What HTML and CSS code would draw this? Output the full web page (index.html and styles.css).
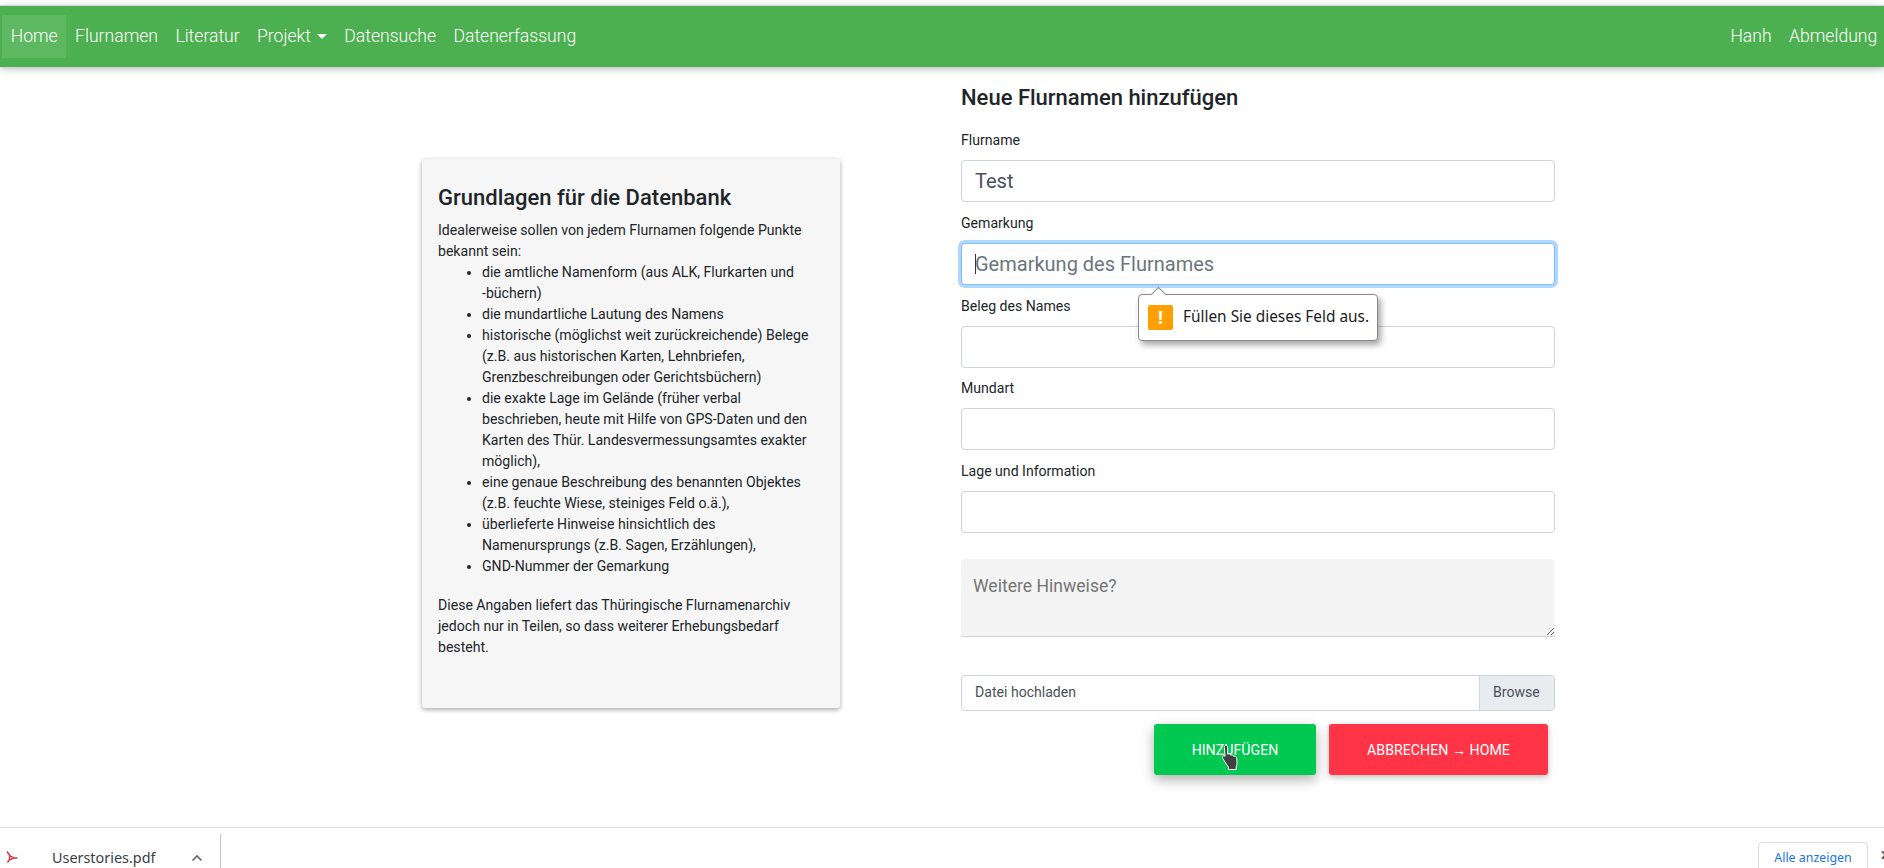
FILE: index.html
```html
<!DOCTYPE html>
<html lang="de">
<head>
    <meta charset="UTF-8">
    <title>Flurnamen</title>
    <link rel="stylesheet" href="styles.css">
</head>
<body>
    <nav class="navbar">
        <ul class="nav-list">
            <li class="nav-item active">Home</li>
            <li class="nav-item">Flurnamen</li>
            <li class="nav-item">Literatur</li>
            <li class="nav-item dropdown">Projekt</li>
            <li class="nav-item">Datensuche</li>
            <li class="nav-item">Datenerfassung</li>
        </ul>
        <ul class="nav-list nav-right">
            <li class="nav-item">Hanh</li>
            <li class="nav-item">Abmeldung</li>
        </ul>
    </nav>

    <main class="content">
        <section class="info-card">
            <h2>Grundlagen für die Datenbank</h2>
            <p>Idealerweise sollen von jedem Flurnamen folgende Punkte bekannt sein:</p>
            <ul class="info-list">
                <li>die amtliche Namenform (aus ALK, Flurkarten und <span class="nowrap">-büchern)</span></li>
                <li>die mundartliche Lautung des Namens</li>
                <li>historische (möglichst weit zurückreichende) Belege (z.B. aus historischen Karten, Lehnbriefen, Grenzbeschreibungen oder Gerichtsbüchern)</li>
                <li>die exakte Lage im Gelände (früher verbal beschrieben, heute mit Hilfe von GPS-Daten und den Karten des Thür. Landesvermessungsamtes exakter möglich),</li>
                <li>eine genaue Beschreibung des benannten Objektes (z.B. feuchte Wiese, steiniges Feld o.ä.),</li>
                <li>überlieferte Hinweise hinsichtlich des Namenursprungs (z.B. Sagen, Erzählungen),</li>
                <li>GND-Nummer der Gemarkung</li>
            </ul>
            <p>Diese Angaben liefert das Thüringische Flurnamenarchiv jedoch nur in Teilen, so dass weiterer Erhebungsbedarf besteht.</p>
        </section>

        <form class="add-form">
            <h3>Neue Flurnamen hinzufügen</h3>
            <div class="field">
                <label>Flurname</label>
                <input class="text-input" type="text" value="Test">
            </div>
            <div class="field">
                <label>Gemarkung</label>
                <div class="text-input focused"><span class="caret-bar"></span>Gemarkung des Flurnames</div>
                <div class="bubble">
                    <span class="bubble-arrow"></span>
                    <span class="bubble-icon">!</span>
                    Füllen Sie dieses Feld aus.
                </div>
            </div>
            <div class="field">
                <label>Beleg des Names</label>
                <input class="text-input" type="text">
            </div>
            <div class="field">
                <label>Mundart</label>
                <input class="text-input" type="text">
            </div>
            <div class="field">
                <label>Lage und Information</label>
                <input class="text-input" type="text">
            </div>
            <textarea class="notes" placeholder="Weitere Hinweise?"></textarea>
            <div class="file-input">
                <span class="file-label">Datei hochladen</span>
                <span class="file-browse">Browse</span>
            </div>
            <div class="buttons">
                <button class="btn btn-add" type="button">HINZUFÜGEN
                    <svg class="hand" width="22" height="26" viewBox="0 0 22 26">
                        <path d="M6 1.5c1 0 1.7.7 1.700 1.700v7l1-.3c.8-.2 1.500.1 1.800.7l.3.6.8-.2c.9-.2 1.600.2 1.900.9l.2.500.7-.1c1.200-.2 2.200.6 2.300 1.800l.3 4.400c.1 1.400-.2 2.700-.8 4v3H8.500v-2.200L2.800 14.500c-.6-.8-.5-1.700.2-2.300.7-.5 1.500-.4 2.100.2l-.8-9c0-1.100.7-1.900 1.700-1.900z" fill="#404040" stroke="#fff" stroke-width="1"/>
                    </svg>
                </button>
                <button class="btn btn-cancel" type="button">ABBRECHEN <span class="arrow">→</span> HOME</button>
            </div>
        </form>
    </main>

    <footer class="download-bar">
        <div class="download-item">
            <svg class="pdf-icon" width="14" height="14" viewBox="0 0 14 14">
                <path d="M2 1.500L4.800 5.500 9 8 4.200 10M4.800 5.500L4.200 10 2.500 12.500M9 8h3.500" fill="none" stroke="#e0323c" stroke-width="1.400"/>
            </svg>
            <span class="file-name">Userstories.pdf</span>
            <svg class="chevron" width="12" height="8" viewBox="0 0 12 8">
                <path d="M1.500 6.500L6 2l4.500 4.500" fill="none" stroke="#5f6368" stroke-width="1.600"/>
            </svg>
        </div>
        <div class="download-right">
            <span class="show-all">Alle anzeigen</span>
            <span class="close-x">×</span>
        </div>
    </footer>
</body>
</html>
```

FILE: styles.css
```css
* {
    box-sizing: border-box;
}
html, body {
    height: 100%;
}
body {
    margin: 0;
    height: 868px;
    overflow: hidden;
    display: flex;
    flex-direction: column;
    font-family: Roboto, "Liberation Sans", sans-serif;
    font-size: 14.080px;
    line-height: 21px;
    color: #212529;
    background-color: #fff;
}

/* navbar */
.navbar {
    flex: none;
    height: 62px;
    margin-top: 5px;
    padding: 0 0 0 2px;
    display: flex;
    justify-content: space-between;
    align-items: center;
    background-color: #4caf50;
    border-top: 1px solid #d9d9d9;
    box-shadow: 0 2px 5px rgba(0, 0, 0, 0.16), 0 2px 10px rgba(0, 0, 0, 0.12);
    position: relative;
}
.nav-list {
    list-style: none;
    margin: 0;
    padding: 0;
    display: flex;
}
.nav-right {
    margin-right: -2px;
}
.nav-item {
    padding: 7px 8.700px;
    font-size: 17.600px;
    font-weight: 300;
    line-height: 29px;
    color: #fff;
}
.nav-item.active {
    background-color: rgba(255, 255, 255, 0.1);
}
.dropdown::after {
    content: "";
    display: inline-block;
    margin-left: 6px;
    vertical-align: 3px;
    border-top: 5px solid #fff;
    border-left: 5px solid transparent;
    border-right: 5px solid transparent;
}

/* page content */
.content {
    flex: 1;
    min-height: 0;
    padding-left: 422px;
    display: flex;
    align-items: flex-start;
    gap: 121px;
}

.info-card {
    width: 418px;
    height: 549px;
    margin-top: 92px;
    padding: 18px 16px;
    background-color: #f6f6f6;
    border-radius: 3px;
    box-shadow: 0 2px 5px rgba(0, 0, 0, 0.26), 0 1px 4px rgba(0, 0, 0, 0.1);
}
.info-card h2 {
    margin: 3px 0 4px;
    font-size: 22px;
    font-weight: 500;
    line-height: 36px;
}
.info-card p {
    margin: 0;
}
.info-list {
    margin: 0 0 18px;
    padding: 0 14px 0 44px;
}
.nowrap {
    white-space: nowrap;
}

/* form */
.add-form {
    width: 594px;
    padding-top: 16px;
}
.add-form h3 {
    margin: 0 0 18px;
    font-size: 22px;
    font-weight: 500;
    line-height: 30px;
}
.field {
    position: relative;
    margin-bottom: 11.750px;
}
.field label {
    display: block;
    margin: -1px 0 9px;
    height: 21px;
}
.text-input {
    display: block;
    width: 100%;
    height: 42px;
    padding: 0 13px;
    border: 1px solid #ced4da;
    border-radius: 4px;
    background-color: #fff;
    font-family: inherit;
    font-size: 20px;
    line-height: 40px;
    color: #495057;
}
.text-input.focused {
    position: relative;
    border-color: #80bdff;
    box-shadow: 0 0 0 3px rgba(0, 123, 255, 0.3);
    color: #6c757d;
}
.caret-bar {
    position: absolute;
    left: 13px;
    top: 10px;
    width: 1px;
    height: 20px;
    background-color: #333;
}

/* browser validation bubble */
.bubble {
    position: absolute;
    z-index: 2;
    left: 177px;
    top: 81px;
    width: 240px;
    height: 47px;
    padding-left: 44px;
    border: 1px solid #8a8a8a;
    border-radius: 4px;
    background-color: #fff;
    box-shadow: 3px 4px 6px rgba(0, 0, 0, 0.35);
    font-family: "Noto Sans", sans-serif;
    font-size: 15.400px;
    line-height: 44px;
    color: #202124;
    white-space: nowrap;
}
.bubble-arrow {
    position: absolute;
    left: 14px;
    top: -6px;
    width: 11px;
    height: 11px;
    background-color: #fff;
    border-top: 1px solid #8a8a8a;
    border-left: 1px solid #8a8a8a;
    transform: rotate(45deg);
}
.bubble-icon {
    position: absolute;
    left: 9px;
    top: 10px;
    width: 25px;
    height: 25px;
    border-radius: 2px;
    background-color: #ffa000;
    color: #fff;
    font-size: 18px;
    font-weight: 700;
    line-height: 25px;
    text-align: center;
}

.notes {
    display: block;
    width: 100%;
    height: 78px;
    margin-top: 26px;
    padding: 14px 12px 12px;
    border: 0;
    border-bottom: 1px solid #ced4da;
    border-radius: 4px 4px 0 0;
    background-color: #f4f4f4;
    font-family: inherit;
    font-size: 17.600px;
    line-height: 27px;
}
.notes::placeholder {
    color: #757575;
}

.file-input {
    display: flex;
    height: 36px;
    margin-top: 38px;
    border: 1px solid #ced4da;
    border-radius: 4px;
    line-height: 33px;
    color: #495057;
}
.file-label {
    flex: 1;
    padding-left: 13px;
}
.file-browse {
    width: 75px;
    padding-left: 13px;
    background-color: #e9ecef;
    border-left: 1px solid #ced4da;
    border-radius: 0 4px 4px 0;
}

.buttons {
    display: flex;
    gap: 13px;
    margin-top: 13px;
    padding-left: 193px;
}
.btn {
    position: relative;
    height: 51px;
    padding: 0;
    border: 0;
    border-radius: 3px;
    color: #fff;
    font-family: inherit;
    font-size: 14.200px;
    box-shadow: 0 2px 5px rgba(0, 0, 0, 0.16), 0 2px 10px rgba(0, 0, 0, 0.12);
}
.arrow {
    font-family: "Liberation Sans", sans-serif;
}
.btn-add {
    width: 162px;
    background-color: #00c851;
    box-shadow: 0 5px 11px rgba(0, 0, 0, 0.18), 0 4px 15px rgba(0, 0, 0, 0.15);
}
.btn-cancel {
    width: 219px;
    background-color: #ff3547;
}
.hand {
    position: absolute;
    left: 66px;
    top: 20px;
}

/* download bar at the bottom */
.download-bar {
    flex: none;
    height: 41px;
    display: flex;
    justify-content: space-between;
    background-color: #fff;
    border-top: 1px solid #dcdcdc;
    overflow: hidden;
    font-family: "Noto Sans", sans-serif;
}
.download-item {
    position: relative;
    width: 221px;
    height: 34px;
    margin-top: 6px;
    border-right: 1px solid #c4c4c4;
}
.pdf-icon {
    position: absolute;
    left: 5px;
    top: 16px;
}
.file-name {
    position: absolute;
    left: 52px;
    top: 13px;
    font-size: 14.400px;
    line-height: 21px;
    color: #3c4043;
}
.chevron {
    position: absolute;
    left: 191px;
    top: 20px;
}
.download-right {
    display: flex;
    align-items: flex-start;
    width: 126px;
    flex: none;
}
.show-all {
    flex: none;
    width: 110px;
    height: 40px;
    margin-top: 14px;
    border: 1px solid #dadce0;
    border-radius: 4px;
    text-align: center;
    font-size: 12.400px;
    line-height: 30px;
    color: #1a73e8;
}
.close-x {
    flex: none;
    margin: 17px 0 0 12px;
    font-size: 20px;
    line-height: 20px;
    font-weight: 700;
    color: #5f6368;
}
```
